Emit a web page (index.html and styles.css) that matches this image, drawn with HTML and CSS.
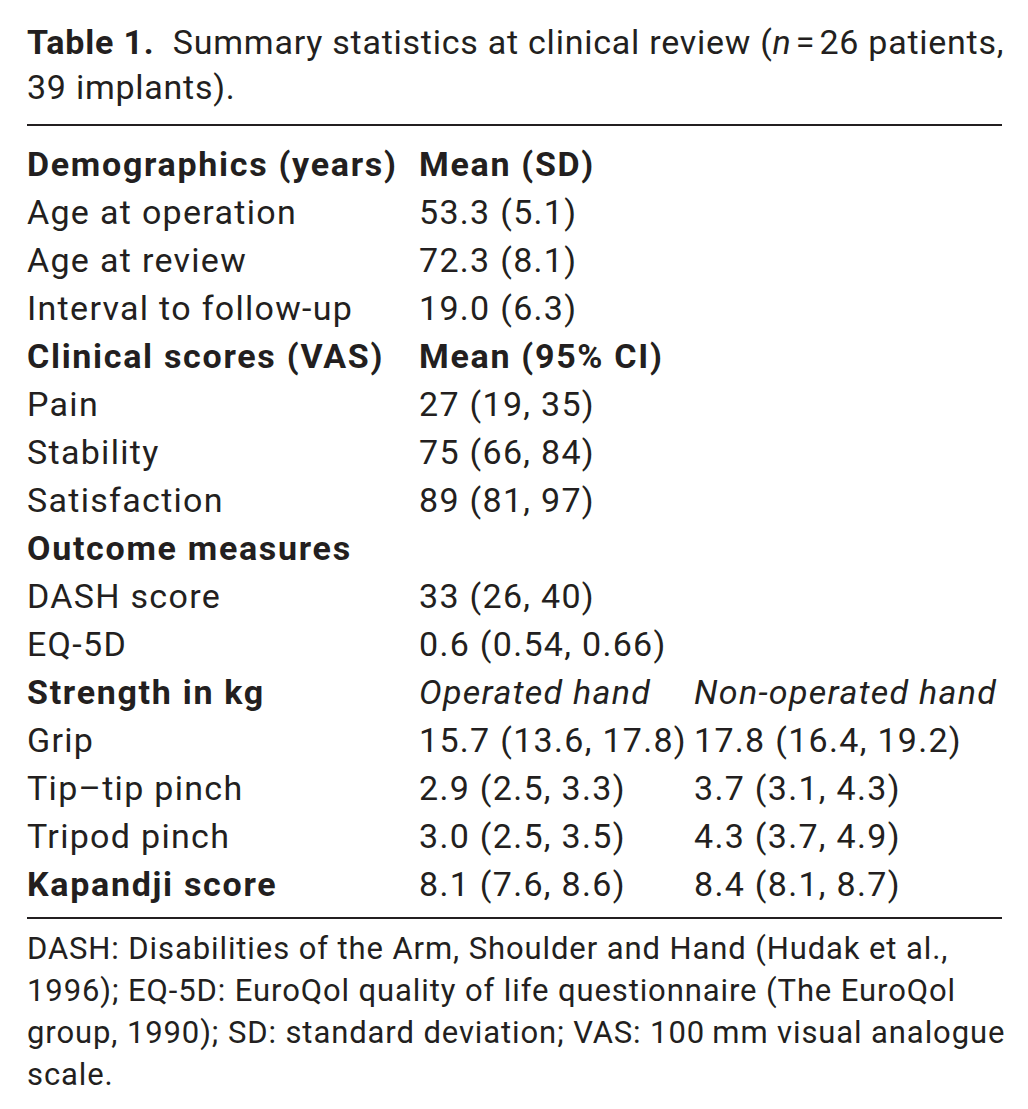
FILE: index.html
```html
<!DOCTYPE html>
<html lang="en">
<head>
<meta charset="utf-8">
<title>Table 1</title>
<link rel="stylesheet" href="styles.css">
</head>
<body>
<div class="page">
  <p class="caption"><b>Table 1.</b>&nbsp; Summary statistics at clinical review (<i>n</i>&#8202;=&#8202;26 patients,<br>39 implants).</p>
  <div class="table">
    <div class="row head"><span>Demographics (years)</span><span>Mean (SD)</span><span></span></div>
    <div class="row"><span>Age at operation</span><span>53.3 (5.1)</span><span></span></div>
    <div class="row"><span>Age at review</span><span>72.3 (8.1)</span><span></span></div>
    <div class="row"><span>Interval to follow-up</span><span>19.0 (6.3)</span><span></span></div>
    <div class="row head"><span>Clinical scores (VAS)</span><span>Mean (95% CI)</span><span></span></div>
    <div class="row"><span>Pain</span><span>27 (19, 35)</span><span></span></div>
    <div class="row"><span>Stability</span><span>75 (66, 84)</span><span></span></div>
    <div class="row"><span>Satisfaction</span><span>89 (81, 97)</span><span></span></div>
    <div class="row head"><span>Outcome measures</span><span></span><span></span></div>
    <div class="row"><span>DASH score</span><span>33 (26, 40)</span><span></span></div>
    <div class="row"><span>EQ-5D</span><span>0.6 (0.54, 0.66)</span><span></span></div>
    <div class="row"><span class="bold">Strength in kg</span><span class="it">Operated hand</span><span class="it">Non-operated hand</span></div>
    <div class="row"><span>Grip</span><span>15.7 (13.6, 17.8)</span><span>17.8 (16.4, 19.2)</span></div>
    <div class="row"><span>Tip–tip pinch</span><span>2.9 (2.5, 3.3)</span><span>3.7 (3.1, 4.3)</span></div>
    <div class="row"><span>Tripod pinch</span><span>3.0 (2.5, 3.5)</span><span>4.3 (3.7, 4.9)</span></div>
    <div class="row"><span class="bold">Kapandji score</span><span>8.1 (7.6, 8.6)</span><span>8.4 (8.1, 8.7)</span></div>
  </div>
  <p class="note">DASH: Disabilities of the Arm, Shoulder and Hand (Hudak et al.,<br>1996); EQ-5D: EuroQol quality of life questionnaire (The EuroQol<br>group, 1990); SD: standard deviation; VAS: 100&#8201;mm visual analogue<br>scale.</p>
</div>
</body>
</html>
```

FILE: styles.css
```css
html, body {
  margin: 0;
  padding: 0;
  background: #ffffff;
}

body {
  font-family: Roboto, "Liberation Sans", sans-serif;
  color: #231f20;
}

.page {
  width: 1028px;
  box-sizing: border-box;
  padding: 20px 26px 0 27px;
}

.caption {
  margin: 0 0 14px 0;
  font-size: 34px;
  line-height: 45px;
  letter-spacing: 0.75px;
  white-space: nowrap;
}

.caption b {
  font-weight: 700;
  letter-spacing: 0.8px;
}

.table {
  border-top: 2px solid #231f20;
  border-bottom: 2px solid #231f20;
  padding: 14px 0 9px 0;
}

.row {
  display: grid;
  grid-template-columns: 392px 275px 1fr;
  height: 48px;
  font-size: 34px;
  line-height: 48px;
  letter-spacing: 1.3px;
  white-space: nowrap;
}

.row.head span,
.row .bold {
  font-weight: 700;
  letter-spacing: 1.7px;
}

.row .it {
  font-style: italic;
}

.note {
  margin: 9px 0 0 0;
  font-size: 31px;
  line-height: 42px;
  letter-spacing: 0.9px;
  white-space: nowrap;
}
```
